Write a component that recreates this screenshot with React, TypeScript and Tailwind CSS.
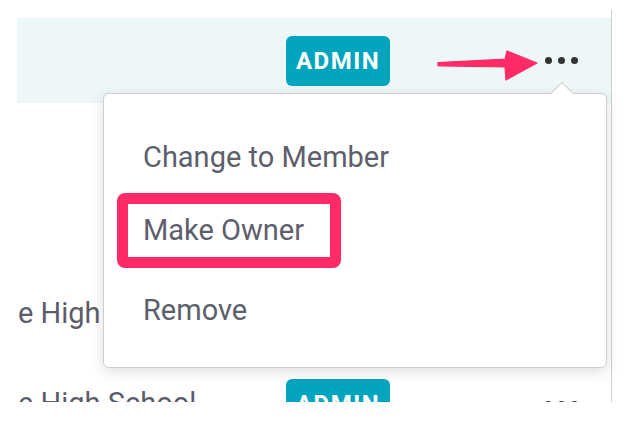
import React from "react";

type RowProps = {
  name?: string;
  height: string;
  highlighted?: boolean;
  covered?: boolean;
};

function Dots() {
  return (
    <div className="ml-auto mr-[33px] flex items-center gap-[6px]">
      <span className="h-[7px] w-[7px] rounded-full bg-[#333]" />
      <span className="h-[7px] w-[7px] rounded-full bg-[#333]" />
      <span className="h-[7px] w-[7px] rounded-full bg-[#333]" />
    </div>
  );
}

function MemberRow({ name, height, highlighted, covered }: RowProps) {
  return (
    <div className={`flex items-center ${height} ${highlighted ? "bg-[#edf7f7]" : ""}`}>
      <div className="w-[269px] shrink-0 pl-[1px] text-[29px] text-[#5b5d6b] whitespace-nowrap">{name}</div>
      {/* the open menu hides this row's badge and dots */}
      {!covered && (
        <>
          <span className="flex h-[50px] w-[104px] shrink-0 items-center justify-center rounded-[6px] bg-[#02a5bd] text-[24px] font-bold tracking-[1.5px] text-white">
            ADMIN
          </span>
          <Dots />
        </>
      )}
    </div>
  );
}

function RoleMenu() {
  return (
    <div className="absolute left-[103px] top-[93px] h-[275px] w-[504px] rounded-[6px] border border-[#cfcfcf] bg-white shadow-[0_4px_14px_rgba(0,0,0,0.13)]">
      {/* caret */}
      <span className="absolute left-[450px] top-[-9px] h-[16px] w-[16px] rotate-45 border-l border-t border-[#cfcfcf] bg-white" />
      <ul className="flex flex-col pl-[39px] pt-[45px] text-[29px] leading-[36px] text-[#5d5f6d]">
        <li>Change to Member</li>
        <li className="mt-[37px]">Make Owner</li>
        <li className="mt-[44px]">Remove</li>
      </ul>
      {/* annotation box */}
      <div className="absolute left-[13px] top-[99px] h-[75px] w-[224px] rounded-[8px] border-[11px] border-[#ff2b67]" />
    </div>
  );
}

function Arrow() {
  return (
    <svg className="absolute left-0 top-0" width="636" height="120" viewBox="0 0 636 120">
      <path
        d="M438 62.6 L505 59.2 L507 51 L537 63 L506 80 L505 67 L438 65.8 Z"
        fill="#ff2b67"
        stroke="#ff2b67"
        strokeWidth="1.2"
        strokeLinejoin="round"
      />
    </svg>
  );
}

export default function App() {
  return (
    <div className="relative h-[436px] w-[636px] bg-white font-['Roboto','Liberation_Sans',sans-serif]">
      <div className="pt-[10px]">
        <div className="h-[392px] w-[612px] overflow-hidden border-r border-[#cfcfcf] pl-[17px] pt-[8px]">
          <MemberRow height="h-[85px]" highlighted />
          <div className="h-[166px]" />
          <MemberRow name="e High" height="h-[90px]" covered />
          <MemberRow name="e High School" height="h-[90px]" />
        </div>
      </div>
      <Arrow />
      <RoleMenu />
    </div>
  );
}
